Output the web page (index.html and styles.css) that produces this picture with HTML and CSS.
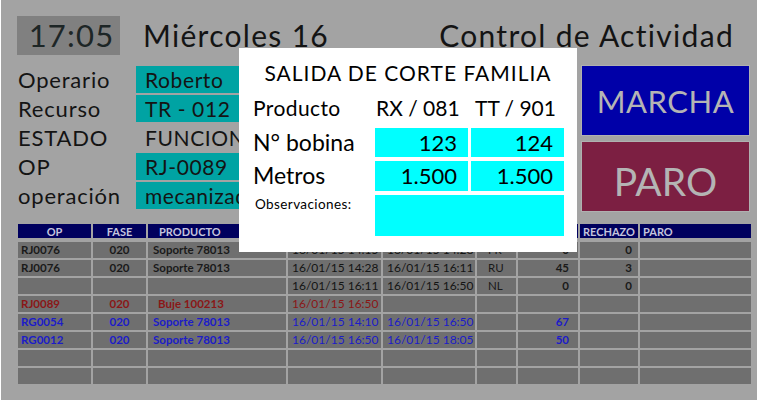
FILE: index.html
```html
<!DOCTYPE html>
<html lang="es">
<head>
<meta charset="utf-8">
<title>Control de Actividad</title>
<link rel="stylesheet" href="styles.css">
</head>
<body>
<div class="screen">
  <header class="top">
    <div class="clock">17:05</div>
    <div class="date">Miércoles 16</div>
    <div class="title">Control de Actividad</div>
  </header>

  <section class="mid">
    <div class="form">
      <div class="frow"><span class="flabel">Operario</span><span class="fval box">Roberto</span></div>
      <div class="frow"><span class="flabel">Recurso</span><span class="fval box">TR - 012</span></div>
      <div class="frow"><span class="flabel">ESTADO</span><span class="fval">FUNCIONANDO</span></div>
      <div class="frow"><span class="flabel">OP</span><span class="fval box">RJ-0089</span></div>
      <div class="frow"><span class="flabel">operación</span><span class="fval box">mecanizado</span></div>
    </div>
    <div class="buttons">
      <div class="btn marcha">MARCHA</div>
      <div class="btn paro">PARO</div>
    </div>
  </section>

  <section class="grid">
    <div class="th c">OP</div>
    <div class="th c">FASE</div>
    <div class="th prod">PRODUCTO</div>
    <div class="th">INICIO</div>
    <div class="th">FIN</div>
    <div class="th">INC</div>
    <div class="th">CANT.</div>
    <div class="th">RECHAZO</div>
    <div class="th">PARO</div>

    <div class="td">RJ0076</div><div class="td c">020</div><div class="td prod">Soporte 78013</div><div class="td dt">16/01/15 14:15</div><div class="td dt">16/01/15 14:28</div><div class="td inc">FR</div><div class="td num">0</div><div class="td num r2">0</div><div class="td"></div>

    <div class="td">RJ0076</div><div class="td c">020</div><div class="td prod">Soporte 78013</div><div class="td dt">16/01/15 14:28</div><div class="td dt">16/01/15 16:11</div><div class="td inc">RU</div><div class="td num">45</div><div class="td num r2">3</div><div class="td"></div>

    <div class="td"></div><div class="td"></div><div class="td"></div><div class="td dt">16/01/15 16:11</div><div class="td dt">16/01/15 16:50</div><div class="td inc">NL</div><div class="td num">0</div><div class="td num r2">0</div><div class="td"></div>

    <div class="td red">RJ0089</div><div class="td c red">020</div><div class="td prod red ind">Buje 100213</div><div class="td dt red">16/01/15 16:50</div><div class="td"></div><div class="td"></div><div class="td"></div><div class="td"></div><div class="td"></div>

    <div class="td blue">RG0054</div><div class="td c blue">020</div><div class="td prod blue">Soporte 78013</div><div class="td dt blue">16/01/15 14:10</div><div class="td dt blue">16/01/15 16:50</div><div class="td"></div><div class="td num blue">67</div><div class="td"></div><div class="td"></div>

    <div class="td blue">RG0012</div><div class="td c blue">020</div><div class="td prod blue">Soporte 78013</div><div class="td dt blue">16/01/15 16:50</div><div class="td dt blue">16/01/15 18:05</div><div class="td"></div><div class="td num blue">50</div><div class="td"></div><div class="td"></div>

    <div class="td"></div><div class="td"></div><div class="td"></div><div class="td"></div><div class="td"></div><div class="td"></div><div class="td"></div><div class="td"></div><div class="td"></div>

    <div class="td"></div><div class="td"></div><div class="td"></div><div class="td"></div><div class="td"></div><div class="td"></div><div class="td"></div><div class="td"></div><div class="td"></div>
  </section>

  <div class="modal">
    <div class="mtitle">SALIDA DE CORTE FAMILIA</div>
    <div class="mgrid">
      <div class="mlabel head">Producto</div>
      <div class="mhead">RX / 081</div>
      <div class="mhead h2">TT / 901</div>

      <div class="mlabel big">N° bobina</div>
      <div class="mcell">123</div>
      <div class="mcell">124</div>

      <div class="mlabel big">Metros</div>
      <div class="mcell">1.500</div>
      <div class="mcell">1.500</div>

      <div class="mlabel small">Observaciones:</div>
      <div class="mobs"></div>
    </div>
  </div>
</div>
</body>
</html>
```

FILE: styles.css
```css
* { box-sizing: border-box; }

html, body {
  margin: 0;
  padding: 0;
  background: #ffffff;
}

body {
  font-family: "Lato", "Liberation Sans", sans-serif;
  color: #141414;
}

.screen {
  position: relative;
  width: 756px;
  height: 400px;
  margin-left: 1px;
  background: #a3a3a3;
  padding: 16px 7px 0 16px;
}

/* ---------- top bar ---------- */
.top {
  display: flex;
  align-items: center;
  height: 39px;
}

.clock {
  width: 103px;
  height: 39px;
  background: #808080;
  color: #1d2626;
  font-size: 31px;
  line-height: 39px;
  letter-spacing: 1.2px;
  text-align: center;
  padding-left: 6px;
}

.date {
  margin-left: 23px;
  font-size: 30px;
  line-height: 39px;
  letter-spacing: 1.3px;
}

.title {
  margin-left: auto;
  margin-right: 16px;
  font-size: 30px;
  line-height: 39px;
  letter-spacing: 1.3px;
}

/* ---------- middle ---------- */
.mid {
  display: flex;
  justify-content: space-between;
  margin-top: 10px;
}

.form {
  display: flex;
  flex-direction: column;
  gap: 2px;
  padding-top: 1px;
  padding-left: 1px;
}

.frow {
  display: flex;
  height: 27px;
  align-items: center;
}

.flabel {
  width: 118px;
  font-size: 22px;
  line-height: 27px;
  letter-spacing: 0.8px;
}

.fval {
  width: 103px;
  height: 27px;
  font-size: 21px;
  line-height: 27px;
  letter-spacing: 0.6px;
  padding-left: 9px;
  white-space: nowrap;
  overflow: hidden;
}

.fval.box {
  background: #00a3a3;
}

.buttons {
  display: flex;
  flex-direction: column;
  gap: 5px;
  width: 169px;
}

.btn {
  height: 71px;
  display: flex;
  align-items: center;
  justify-content: center;
  color: #b4b4b4;
  border: 1px solid #b0b0b0;
}

.marcha {
  background: #0000a8;
  font-size: 31px;
  letter-spacing: 0.5px;
}

.paro {
  background: #7c1f42;
  font-size: 39px;
  padding-top: 8px;
}

/* ---------- table ---------- */
.grid {
  display: grid;
  grid-template-columns: 73px 53px 138px 93px 92px 39px 60px 58px 111px;
  grid-auto-rows: 16px;
  column-gap: 2px;
  row-gap: 2px;
  margin-top: 12px;
  margin-left: 1px;
  width: 733px;
}

.th {
  background: #00005e;
  color: #c4c4dc;
  font-size: 11px;
  font-weight: 700;
  line-height: 16px;
  padding-left: 3px;
  margin-bottom: 2px;
  white-space: nowrap;
  overflow: hidden;
}

.th.prod { padding-left: 11px; }

.td {
  background: #6f6f6f;
  color: #1a1a1a;
  font-size: 11.5px;
  font-weight: 700;
  line-height: 16px;
  padding-left: 3px;
  white-space: nowrap;
  overflow: hidden;
}

.c { text-align: center; padding-left: 0; }
.th.c { padding-left: 0; }
.td.prod { padding-left: 5px; }
.td.ind { padding-left: 10px; }
.td.dt { font-size: 12px; font-weight: 400; padding-left: 4px; color: #141414; }
.td.dt.red { color: #8a1717; }
.td.dt.blue { color: #1c1cc8; }
.td.inc { padding-left: 11px; font-weight: 400; }
.td.num { text-align: right; padding-right: 9px; }
.td.num.r2 { padding-right: 6px; }

.red { color: #8a1717; }
.blue { color: #1c1cc8; }

/* ---------- modal ---------- */
.modal {
  position: absolute;
  left: 238px;
  top: 48px;
  width: 338px;
  height: 204px;
  background: #ffffff;
  padding: 12px 0 0 14px;
  color: #000;
}

.mtitle {
  margin-left: -14px;
  text-align: center;
  font-size: 21px;
  line-height: 26px;
  letter-spacing: 1px;
}

.mgrid {
  display: grid;
  grid-template-columns: 119px 93px 93px;
  grid-template-rows: 32px 29px 30px 41px;
  column-gap: 3px;
  row-gap: 4px;
  margin-top: 6px;
}

.mlabel {
  font-size: 21px;
  line-height: 29px;
  letter-spacing: 0.4px;
  white-space: nowrap;
}

.mlabel.head { line-height: 32px; }
.mlabel.big { font-size: 23px; letter-spacing: 0; }
.mlabel.small { font-size: 13.5px; line-height: 18px; padding-left: 2px; }

.mhead {
  font-size: 21px;
  line-height: 32px;
  padding-left: 1px;
  white-space: nowrap;
}
.mhead.h2 { padding-left: 4px; }

.mcell {
  background: #00ffff;
  font-size: 22px;
  line-height: 29px;
  text-align: right;
  padding-right: 11px;
}

.mobs {
  grid-column: 2 / 4;
  background: #00ffff;
}
```
